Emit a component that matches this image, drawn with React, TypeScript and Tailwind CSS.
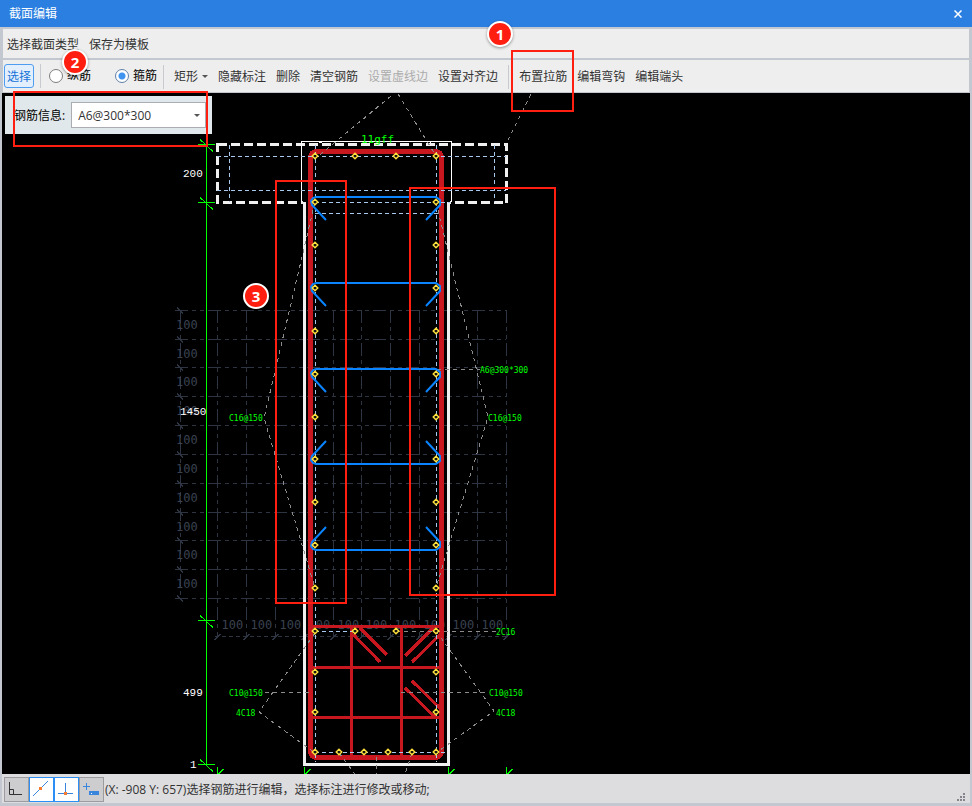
import { useState } from 'react';
import clsx from 'clsx';

const GRID_X = [217.5, 246.5, 275.5, 304.5, 333.5, 361.5, 390.5, 419.5, 448.5, 477.5, 506.5];
const GRID_Y = [310.5, 339.5, 367.5, 396.5, 425.5, 454.5, 483.5, 512.5, 540.5, 569.5, 598.5];

const SIDE_BARS = [156, 202, 245, 288, 331, 374, 417, 459, 502, 545, 588, 631, 672, 712, 752];
const BARS = [
  ...SIDE_BARS.map((y) => [315, y]),
  ...SIDE_BARS.map((y) => [436, y]),
  [355, 156],
  [396, 156],
  [355, 631],
  [396, 631],
  [339, 752],
  [364, 752],
  [388, 752],
  [412, 752]
];

// dir is 1 when the hooks point down, -1 when they point up
const TIES = [
  { y: 197, dir: 1 },
  { y: 283, dir: 1 },
  { y: 369, dir: 1 },
  { y: 464, dir: -1 },
  { y: 550, dir: -1 }
];

const LEADERS = [
  '391,96 316,158',
  '398,94 436,156',
  '531,94 506,144',
  '315,202 264,418 315,588',
  '436,202 488,417 436,588',
  '437,369.5 480,369.5',
  '396,631.5 496,631.5',
  '265,692.5 312,692.5',
  '401,692.5 488,692.5',
  '315,633 259,712 315,753',
  '436,631 494,711 436,753',
  '339,753 355,774',
  '376.5,757 376.5,774',
  '412,753 405,774'
];

const STIRRUP_HOOKS = [
  'M353 634L380 662',
  'M360 628L387 655',
  'M405 656L433 628',
  'M412 662L440 635',
  'M405 688L436 718',
  'M412 681L440 708'
];

const NOTES = [
  { x: 229, y: 421, text: 'C16@150' },
  { x: 488, y: 421, text: 'C16@150' },
  { x: 480, y: 373, text: 'A6@300*300' },
  { x: 496, y: 635, text: '2C16' },
  { x: 229, y: 696, text: 'C10@150' },
  { x: 489, y: 696, text: 'C10@150' },
  { x: 236, y: 716, text: '4C18' },
  { x: 496, y: 716, text: '4C18' }
];

const DIMENSIONS = [
  { x: 183, y: 177, text: '200' },
  { x: 180, y: 415, text: '1450' },
  { x: 183, y: 696, text: '499' },
  { x: 190, y: 768, text: '1' }
];

function SectionDrawing() {
  return (
    <svg
      width="968"
      height="681"
      viewBox="2 93 968 681"
      fill="none"
      shapeRendering="crispEdges"
      className="block shrink-0"
      fontFamily='"DejaVu Sans Mono", monospace'>
      {/* background grid */}
      <g stroke="#2e3542" strokeDasharray="13 4 4 4 4 4">
        {GRID_X.map((x) => (
          <path key={x} d={`M${x} 310V636`} />
        ))}
        {GRID_Y.map((y) => (
          <path key={y} d={`M175 ${y}H506`} />
        ))}
        <path d="M180.5 310V598" />
        <path d="M215 636.5H508" strokeDasharray="4 3" />
      </g>
      <g stroke="#2e3542">
        {GRID_X.map((x) => (
          <path key={x} d={`M${x - 3} 640L${x + 3} 634`} />
        ))}
        {GRID_Y.map((y) => (
          <path key={y} d={`M177 ${y - 3}L183 ${y + 3}`} />
        ))}
      </g>
      <g fill="#3a4250" fontSize="12">
        {GRID_Y.slice(0, -1).map((y) => (
          <text key={y} x="176" y={y + 18}>
            100
          </text>
        ))}
        {GRID_X.slice(0, -1).map((x) => (
          <text key={x} x={x + 4} y="629">
            100
          </text>
        ))}
      </g>

      {/* concrete outline */}
      <path d="M217.5 143V202.5H303" stroke="#f0f0f0" strokeWidth="3" strokeDasharray="9 4" />
      <path d="M217.5 144.5H506.5V202.5H450" stroke="#f0f0f0" strokeWidth="3" strokeDasharray="9 4" />
      <path d="M301.5 202V141.5H451.5V202" stroke="#fff" />
      <path d="M319 142.5H322M430 140.5V143" stroke="#fff" />
      <path d="M304.5 202V764.5H448.5V202" stroke="#f0f0f0" strokeWidth="3" />

      {/* stirrups */}
      <g stroke="#c8171e" strokeWidth="3">
        <rect x="310.5" y="151.5" width="131" height="606" rx="6" strokeWidth="5" />
        <path d="M313 626.5H440M313 667.5H440M313 717.5H440M351.5 628V757M401.5 628V757" />
        {STIRRUP_HOOKS.map((d) => (
          <path key={d} d={d} />
        ))}
      </g>

      {/* cover lines */}
      <g stroke="#a9c8ee" strokeDasharray="4 3">
        <path d="M217 156.5H506M217 190.5H506M315 202.5H450M315 213.5H440" />
        <path d="M229.5 145V202M494.5 145V202M315.5 145V762M436.5 145V762" />
        <path d="M315 631.5H352M315 752.5H447" />
      </g>

      <g stroke="#8c8c8c" strokeDasharray="4 4">
        {LEADERS.map((points) => (
          <polyline key={points} points={points} />
        ))}
      </g>

      {/* tie bars */}
      <g stroke="#0a84ff" strokeWidth="2" shapeRendering="auto">
        {TIES.map(({ y, dir }) => (
          <path
            key={y}
            d={`M326 ${y + 23 * dir}L312 ${y + 8 * dir}L311 ${y + 4 * dir}L313 ${y + dir}L316 ${y}H436L440 ${y + 3 * dir}V${y + 8 * dir}L426 ${y + 23 * dir}`}
          />
        ))}
      </g>

      <g stroke="#ffe23c" strokeWidth="1.4" fill="#111" shapeRendering="auto">
        {BARS.map(([x, y]) => (
          <path key={`${x}-${y}`} d={`M${x} ${y - 2.8}L${x + 2.8} ${y}L${x} ${y + 2.8}L${x - 2.8} ${y}Z`} />
        ))}
      </g>

      {/* dimension line */}
      <g stroke="#00ff00">
        <path d="M206.5 144V765" />
        {[144.5, 202.5, 620.5, 764.5].map((y) => (
          <path key={y} d={`M198 ${y}H215M200 ${y - 5}L213 ${y + 7}`} />
        ))}
        {[217.5, 304.5, 448.5, 506.5].map((x) => (
          <path key={x} d={`M${x} 767V774M${x + 1} 774L${x + 6} 769`} />
        ))}
      </g>
      <g fill="#fff" fontSize="11" fontFamily='"Liberation Mono", monospace'>
        {DIMENSIONS.map((item) => (
          <text key={item.text} x={item.x} y={item.y}>
            {item.text}
          </text>
        ))}
      </g>
      <g fill="#00ff00" fontSize="8">
        {NOTES.map((item) => (
          <text key={`${item.x}-${item.y}`} x={item.x} y={item.y}>
            {item.text}
          </text>
        ))}
        <text x="361" y="143" fontSize="11">
          11gff
        </text>
      </g>
    </svg>
  );
}

function Separator() {
  return <span className="h-6 w-px bg-[#c8cad0]" />;
}

function ModeRadio({ label, checked, onChange }: { label: string; checked: boolean; onChange: () => void }) {
  return (
    <label className="flex items-center gap-1 text-black">
      <input
        type="radio"
        name="mode"
        checked={checked}
        onChange={onChange}
        className="size-3.5 appearance-none rounded-full border border-[#7d7d7d] bg-white checked:border-[#5f7fa8] checked:bg-[radial-gradient(circle,#3f94f0_0_3px,#fff_4px)]"
      />
      {label}
    </label>
  );
}

function Marker({ children, className }: { children: string; className: string }) {
  return (
    <span
      className={clsx(
        'absolute flex size-[26px] items-center justify-center rounded-full border-2 border-white bg-[#ff1e10] text-[15px] font-bold text-white shadow-[0_1px_3px_rgba(0,0,0,0.4)]',
        className
      )}>
      {children}
    </span>
  );
}

const SNAP_BUTTONS = [
  {
    name: '正交',
    active: false,
    icon: <path d="M4.5 4V16.5H17M4.5 11.5H8.5V16.5" stroke="#333" />
  },
  {
    name: '中点',
    active: true,
    icon: (
      <>
        <path d="M3 18L18 3" stroke="#3b86dd" />
        <path d="M9 9H12V12H9Z" fill="#f47b30" />
      </>
    )
  },
  {
    name: '垂点',
    active: true,
    icon: (
      <>
        <path d="M10.5 5V15M3 15.5H18" stroke="#3b86dd" />
        <path d="M9 14H12V17H9Z" fill="#f47b30" />
      </>
    )
  },
  {
    name: '动态输入',
    active: false,
    icon: (
      <>
        <path d="M6.5 5V12M3 8.5H10" stroke="#3b86dd" />
        <path d="M9 13H19V17H9Z" fill="#3b86dd" />
        <path d="M11 15.5H12" stroke="#fff" />
      </>
    )
  }
];

export default function App() {
  const [mode, setMode] = useState('stirrup');
  const [rebar, setRebar] = useState('A6@300*300');

  return (
    <div className="relative w-full overflow-hidden bg-[#c3c7d0] font-['Open_Sans','Noto_Sans_CJK_SC',sans-serif] text-xs text-[#333]">
      <header className="flex h-[27px] items-center justify-between bg-[#2b7fe1] pr-2.5 pl-[9px] text-white">
        <h1>截面编辑</h1>
        <button type="button" aria-label="关闭">
          <svg width="8" height="8" viewBox="0 0 8 8" className="block" stroke="#fff" strokeWidth="1.5">
            <path d="M0.5 0.5L7.5 7.5M7.5 0.5L0.5 7.5" />
          </svg>
        </button>
      </header>

      <nav className="mx-[3px] mt-0.5 flex h-[29px] items-center gap-2.5 bg-[#eee] px-1 pt-0.5">
        <button type="button">选择截面类型</button>
        <button type="button">保存为模板</button>
      </nav>

      <div className="mx-[3px] mt-0.5 flex h-8 items-center bg-[#eee] pl-px whitespace-nowrap">
        <button
          type="button"
          className="h-6 w-[30px] rounded-[3px] border border-[#4f9df0] bg-[#e3effc] pt-0.5 text-[#1673d8]">
          选择
        </button>
        <div className="ml-1.5 flex items-center gap-2">
          <Separator />
          <div className="flex items-center gap-6">
            <ModeRadio label="纵筋" checked={mode === 'main'} onChange={() => setMode('main')} />
            <ModeRadio label="箍筋" checked={mode === 'stirrup'} onChange={() => setMode('stirrup')} />
          </div>
        </div>
        <div className="ml-1.5 flex items-center gap-2.5 pt-0.5">
          <Separator />
          <button type="button" className="flex items-center gap-1">
            矩形
            <svg width="6" height="4" viewBox="0 0 6 4" fill="#555">
              <path d="M0 0H6L3 3Z" />
            </svg>
          </button>
          <button type="button">隐藏标注</button>
          <button type="button">删除</button>
          <button type="button">清空钢筋</button>
          <button type="button" disabled className="text-[#acacac]">
            设置虚线边
          </button>
          <button type="button">设置对齐边</button>
          <Separator />
          <button type="button">布置拉筋</button>
          <button type="button">编辑弯钩</button>
          <button type="button">编辑端头</button>
        </div>
      </div>

      <main className="relative mx-0.5 mt-px flex overflow-hidden bg-black">
        <SectionDrawing />
        <div className="absolute top-[3px] left-[3px] flex h-[38px] items-center gap-1.5 bg-[#e1e8eb] pr-1.5 pl-[9px] text-black">
          <label htmlFor="rebar" className="pt-0.5">
            钢筋信息:
          </label>
          <div className="relative">
            <select
              id="rebar"
              value={rebar}
              onChange={(e) => setRebar(e.target.value)}
              className="block h-[26px] w-[135px] appearance-none border border-[#abadb3] bg-white pt-px pl-1.5 text-[#333]">
              <option>A6@300*300</option>
              <option>A8@200*200</option>
            </select>
            <svg width="6" height="4" viewBox="0 0 6 4" fill="#555" className="pointer-events-none absolute top-3 right-1.5">
              <path d="M0 0H6L3 3Z" />
            </svg>
          </div>
        </div>
      </main>

      <footer className="mx-0.5 mb-[3px] flex h-[29px] items-center bg-[#dddddf] pt-px pl-0.5">
        {SNAP_BUTTONS.map((button) => (
          <button
            key={button.name}
            type="button"
            aria-label={button.name}
            aria-pressed={button.active}
            className={clsx(
              'size-[25px] border',
              button.active ? 'border-[#2b8ff5] bg-white' : 'border-[#9b9ba0] bg-[#cdcdd0]'
            )}>
            <svg width="23" height="23" viewBox="0 0 23 23" fill="none" className="block">
              {button.icon}
            </svg>
          </button>
        ))}
        <output className="ml-px pt-px">(X: -908 Y: 657)选择钢筋进行编辑，选择标注进行修改或移动;</output>
        <svg width="10" height="10" viewBox="0 0 10 10" fill="#85868c" className="mr-1 ml-auto self-end">
          <path d="M7 0H9V2H7ZM7 3H9V5H7ZM4 3H6V5H4ZM7 6H9V8H7ZM4 6H6V8H4ZM1 6H3V8H1Z" />
        </svg>
      </footer>

      {/* walkthrough marks */}
      <div className="pointer-events-none">
        <span className="absolute top-[50px] left-[511px] h-[62px] w-[63px] border-2 border-[#ff1e10]" />
        <span className="absolute top-[91px] left-[13px] h-14 w-[195px] border-2 border-[#ff1e10]" />
        <span className="absolute top-[180px] left-[275px] h-[424px] w-[72px] border-2 border-[#ff1e10]" />
        <span className="absolute top-[187px] left-[409px] h-[409px] w-[147px] border-2 border-[#ff1e10]" />
        <Marker className="top-[21px] left-[487px]">1</Marker>
        <Marker className="top-[49px] left-[62px]">2</Marker>
        <Marker className="top-[283px] left-[243px]">3</Marker>
      </div>
    </div>
  );
}
